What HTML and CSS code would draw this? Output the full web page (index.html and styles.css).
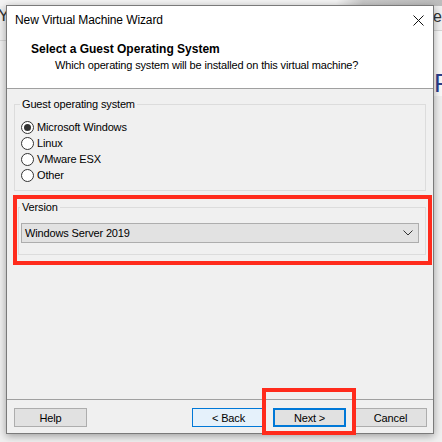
FILE: index.html
```html
<!DOCTYPE html>
<html>
<head>
<meta charset="utf-8">
<link rel="stylesheet" href="styles.css">
</head>
<body>
<div class="desktop">
  <div class="shade"></div>
  <span class="bg-y">Y</span>
  <div class="bg-line-left"></div>
  <span class="bg-er">er</span>
  <div class="bg-line-right"></div>
  <div class="bg-white-right"></div>
  <span class="bg-r">R</span>
</div>

<div class="dialog">
  <div class="top">
    <div class="titlebar">
      <span class="title">New Virtual Machine Wizard</span>
      <svg class="close" width="11" height="11" viewBox="0 0 11 11"><path d="M0.5 0.5 L10.5 10.5 M10.5 0.5 L0.5 10.5" stroke="#111" stroke-width="1" fill="none"/></svg>
    </div>
    <div class="header">
      <div class="heading">Select a Guest Operating System</div>
      <div class="subheading">Which operating system will be installed on this virtual machine?</div>
    </div>
  </div>

  <div class="content">
    <fieldset class="group">
      <legend>Guest operating system</legend>
      <div class="radio"><span class="circle checked"></span><span class="label">Microsoft Windows</span></div>
      <div class="radio"><span class="circle"></span><span class="label">Linux</span></div>
      <div class="radio"><span class="circle"></span><span class="label">VMware ESX</span></div>
      <div class="radio"><span class="circle"></span><span class="label">Other</span></div>
    </fieldset>

    <fieldset class="group version">
      <legend>Version</legend>
      <div class="combo">
        <span class="combo-text">Windows Server 2019</span>
        <svg class="chevron" width="10" height="6" viewBox="0 0 10 6"><path d="M0.5 0.5 L5 5 L9.5 0.5" stroke="#333" stroke-width="1" fill="none"/></svg>
      </div>
    </fieldset>
  </div>

  <div class="footer">
    <button class="btn">Help</button>
    <div class="spacer"></div>
    <button class="btn hover">&lt; Back</button>
    <button class="btn default">Next &gt;</button>
    <button class="btn">Cancel</button>
  </div>
</div>

<div class="mark mark-version"></div>
<div class="mark mark-next"></div>
</body>
</html>
```

FILE: styles.css
```css
html, body {
  margin: 0;
  padding: 0;
}
body {
  width: 442px;
  height: 442px;
  overflow: hidden;
  position: relative;
  background: #f0f0f0;
  font-family: "Liberation Sans", Arial, sans-serif;
  font-size: 11px;
  letter-spacing: -0.15px;
  color: #000;
}

/* background application behind the dialog */
.desktop {
  position: absolute;
  inset: 0;
  letter-spacing: 0;
}
.shade {
  position: absolute;
  left: 0;
  top: 0;
  width: 442px;
  height: 6px;
  background: linear-gradient(100deg, #f4f4f4 0%, #f4f4f4 76%, #c9c9c9 82%, #bdbdbd 100%);
}
.bg-y {
  position: absolute;
  left: -2px;
  top: 6px;
  font-size: 17px;
  color: #333;
}
.bg-line-left {
  position: absolute;
  left: 0;
  top: 40px;
  width: 6px;
  height: 1px;
  background: #d6d6d6;
}
.bg-er {
  position: absolute;
  left: 433px;
  top: 8px;
  font-size: 16px;
  color: #333;
}
.bg-line-right {
  position: absolute;
  left: 434px;
  top: 30px;
  width: 8px;
  height: 1px;
  background: #d6d6d6;
}
.bg-white-right {
  position: absolute;
  left: 434px;
  top: 31px;
  width: 8px;
  height: 65px;
  background: #fafafa;
}
.bg-r {
  position: absolute;
  left: 434px;
  top: 68px;
  font-size: 26px;
  color: #2c3f8c;
}

/* dialog window */
.dialog {
  position: absolute;
  left: 6px;
  top: 5px;
  width: 428px;
  height: 429px;
  box-sizing: border-box;
  border: 1px solid #7a7a7a;
  background: #f0f0f0;
  box-shadow: 0 2px 8px rgba(0, 0, 0, 0.35);
  display: flex;
  flex-direction: column;
}

.top {
  background: #fff;
  height: 83px;
  box-sizing: border-box;
  border-bottom: 1px solid #a0a0a0;
}
.titlebar {
  height: 28px;
  display: flex;
  align-items: center;
  padding-left: 8px;
}
.title {
  flex: 1;
  font-size: 12px;
  letter-spacing: -0.1px;
  line-height: 16px;
}
.close {
  margin-right: 9px;
  display: block;
}
.header {
  padding-top: 8px;
}
.heading {
  font-weight: bold;
  font-size: 12px;
  letter-spacing: 0;
  line-height: 15px;
  padding-left: 24px;
}
.subheading {
  line-height: 16px;
  padding-left: 48px;
}

.content {
  flex: 1;
  padding: 7px 7px 0 7px;
  display: flex;
  flex-direction: column;
}

.group {
  margin: 0;
  padding: 7px 0 7px 0;
  border: 1px solid #dcdcdc;
  min-width: 0;
}
.group legend {
  padding: 0 2px;
  margin-left: 5px;
  line-height: 16px;
}
.radio {
  height: 16px;
  display: flex;
  align-items: center;
}
.circle {
  width: 13px;
  height: 13px;
  box-sizing: border-box;
  border: 1px solid #333;
  border-radius: 50%;
  background: #fff;
  margin-left: 6px;
  display: flex;
  align-items: center;
  justify-content: center;
}
.circle.checked::after {
  content: "";
  width: 7px;
  height: 7px;
  border-radius: 50%;
  background: #333;
}
.label {
  margin-left: 3px;
}

.version {
  margin-top: 8px;
  margin-left: 4px;
  padding: 8px 0 11px 0;
}
.version legend {
  margin-left: 1px;
}
.combo {
  height: 20px;
  box-sizing: border-box;
  margin: 0 6px 0 2px;
  border: 1px solid #adadad;
  background: #e2e2e2;
  display: flex;
  align-items: center;
  padding: 0 5px 0 3px;
}
.combo-text {
  flex: 1;
}
.chevron {
  display: block;
}

.footer {
  height: 34px;
  box-sizing: border-box;
  border-top: 1px solid #a0a0a0;
  padding: 8px 6px 0 7px;
  display: flex;
  align-items: flex-start;
  gap: 8px;
}
.spacer {
  flex: 1;
}
.btn {
  width: 73px;
  height: 19px;
  box-sizing: border-box;
  border: 1px solid #adadad;
  background: #e1e1e1;
  font-family: inherit;
  font-size: 11px;
  letter-spacing: -0.15px;
  color: #000;
  padding: 0;
  margin: 0;
  line-height: 16px;
}
.btn.hover {
  background: #e5f1fb;
  border-color: #0078d7;
}
.btn.default {
  border: 2px solid #0078d7;
}

/* red annotation boxes */
.mark {
  position: absolute;
  box-sizing: border-box;
  border: 4px solid #ff2b1c;
}
.mark-version {
  left: 13px;
  top: 195px;
  width: 419px;
  height: 70px;
}
.mark-next {
  left: 262px;
  top: 388px;
  width: 94px;
  height: 47px;
}
```
